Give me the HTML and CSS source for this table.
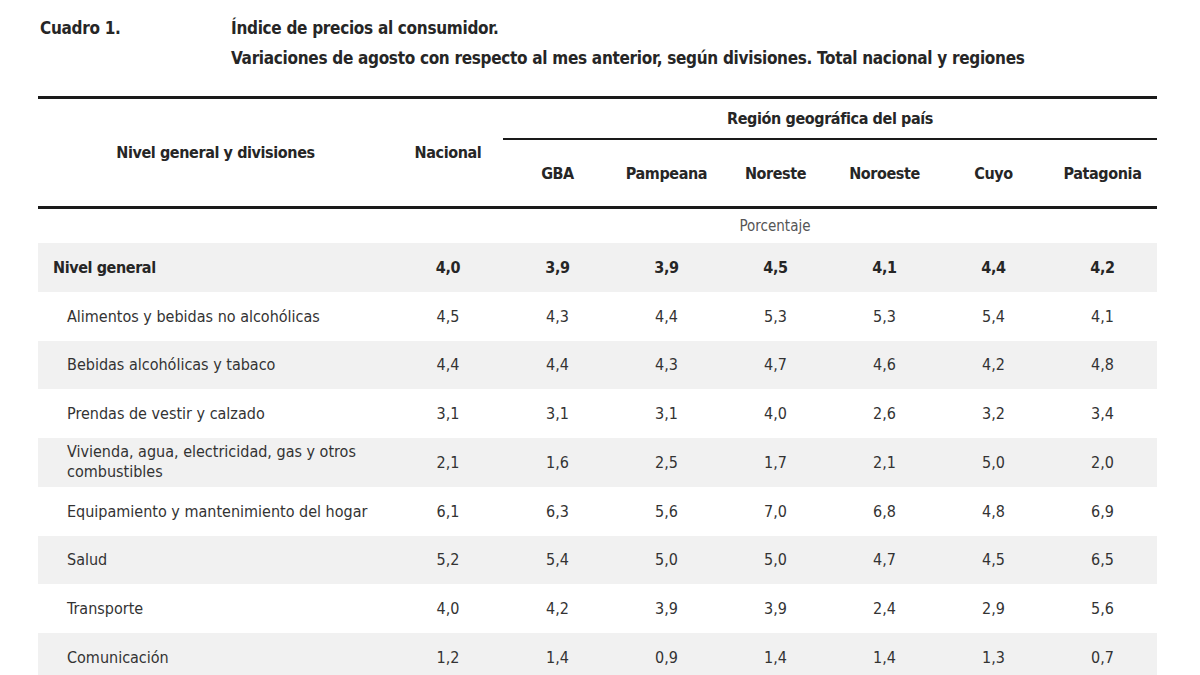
FILE: index.html
```html
<!DOCTYPE html>
<html lang="es">
<head>
<meta charset="utf-8">
<title>Cuadro 1</title>
<link rel="stylesheet" href="styles.css">
</head>
<body>
<div class="page">
  <header class="caption">
    <div class="label">Cuadro 1.</div>
    <div class="titles">
      <div>Índice de precios al consumidor.</div>
      <div>Variaciones de agosto con respecto al mes anterior, según divisiones. Total nacional y regiones</div>
    </div>
  </header>
  <table class="ipc">
    <colgroup>
      <col class="c-name"><col class="c-nac">
      <col class="c-reg"><col class="c-reg"><col class="c-reg"><col class="c-reg"><col class="c-reg"><col class="c-reg">
    </colgroup>
    <thead>
      <tr class="h1">
        <th rowspan="2" class="hname">Nivel general y divisiones</th>
        <th rowspan="2" class="hnac">Nacional</th>
        <th colspan="6" class="hreg">Región geográfica del país</th>
      </tr>
      <tr class="h2">
        <th>GBA</th><th>Pampeana</th><th>Noreste</th><th>Noroeste</th><th>Cuyo</th><th>Patagonia</th>
      </tr>
    </thead>
    <tbody>
      <tr class="unit"><td></td><td colspan="7">Porcentaje</td></tr>
      <tr class="shade total"><td>Nivel general</td><td>4,0</td><td>3,9</td><td>3,9</td><td>4,5</td><td>4,1</td><td>4,4</td><td>4,2</td></tr>
      <tr><td>Alimentos y bebidas no alcohólicas</td><td>4,5</td><td>4,3</td><td>4,4</td><td>5,3</td><td>5,3</td><td>5,4</td><td>4,1</td></tr>
      <tr class="shade"><td>Bebidas alcohólicas y tabaco</td><td>4,4</td><td>4,4</td><td>4,3</td><td>4,7</td><td>4,6</td><td>4,2</td><td>4,8</td></tr>
      <tr><td>Prendas de vestir y calzado</td><td>3,1</td><td>3,1</td><td>3,1</td><td>4,0</td><td>2,6</td><td>3,2</td><td>3,4</td></tr>
      <tr class="shade"><td class="two">Vivienda, agua, electricidad, gas y otros combustibles</td><td>2,1</td><td>1,6</td><td>2,5</td><td>1,7</td><td>2,1</td><td>5,0</td><td>2,0</td></tr>
      <tr><td>Equipamiento y mantenimiento del hogar</td><td>6,1</td><td>6,3</td><td>5,6</td><td>7,0</td><td>6,8</td><td>4,8</td><td>6,9</td></tr>
      <tr class="shade"><td>Salud</td><td>5,2</td><td>5,4</td><td>5,0</td><td>5,0</td><td>4,7</td><td>4,5</td><td>6,5</td></tr>
      <tr><td>Transporte</td><td>4,0</td><td>4,2</td><td>3,9</td><td>3,9</td><td>2,4</td><td>2,9</td><td>5,6</td></tr>
      <tr class="shade"><td>Comunicación</td><td>1,2</td><td>1,4</td><td>0,9</td><td>1,4</td><td>1,4</td><td>1,3</td><td>0,7</td></tr>
    </tbody>
  </table>
</div>
</body>
</html>
```
FILE: styles.css
```css
html, body {
  margin: 0;
  padding: 0;
  background: #ffffff;
}
body {
  font-family: "DejaVu Sans Condensed", "Liberation Sans Narrow", "Liberation Sans", sans-serif;
  color: #2b2b2b;
}
.page {
  padding: 13px 0 0 38px;
  width: 1119px;
}
.caption {
  display: flex;
  font-weight: bold;
  font-size: 17px;
  letter-spacing: -0.3px;
  line-height: 30px;
  color: #262626;
}
.caption .label {
  width: 191px;
  padding-left: 2px;
}
.titles {
  flex: 1;
}
.ipc {
  margin-top: 23px;
  width: 1119px;
  border-collapse: collapse;
  table-layout: fixed;
  font-size: 16px;
}
.c-name { width: 355px; }
.c-nac { width: 110px; }
.c-reg { width: 109px; }
.ipc th {
  font-weight: bold;
  color: #262626;
  text-align: center;
  padding: 0;
  letter-spacing: -0.4px;
}
.h1 th {
  border-top: 3px solid #1a1a1a;
}
.hreg {
  height: 39px;
  border-bottom: 2px solid #1a1a1a;
}
.h2 th {
  height: 66px;
  border-bottom: 3px solid #1a1a1a;
}
.hname, .hnac {
  border-bottom: 3px solid #1a1a1a;
}
.ipc td {
  text-align: center;
  padding: 0;
  height: 48.75px;
  color: #333333;
}
.ipc td:first-child {
  text-align: left;
  padding-left: 29px;
}
.ipc td.two {
  line-height: 20px;
}
.unit td {
  height: 34px;
  color: #555555;
  font-size: 15px;
  vertical-align: middle;
}
.unit td:nth-child(2) {
  text-align: center;
}
.shade td {
  background: #f1f1f1;
}
.total td {
  font-weight: bold;
  color: #262626;
  letter-spacing: -0.4px;
}
.total td:first-child {
  padding-left: 15px;
}
```
